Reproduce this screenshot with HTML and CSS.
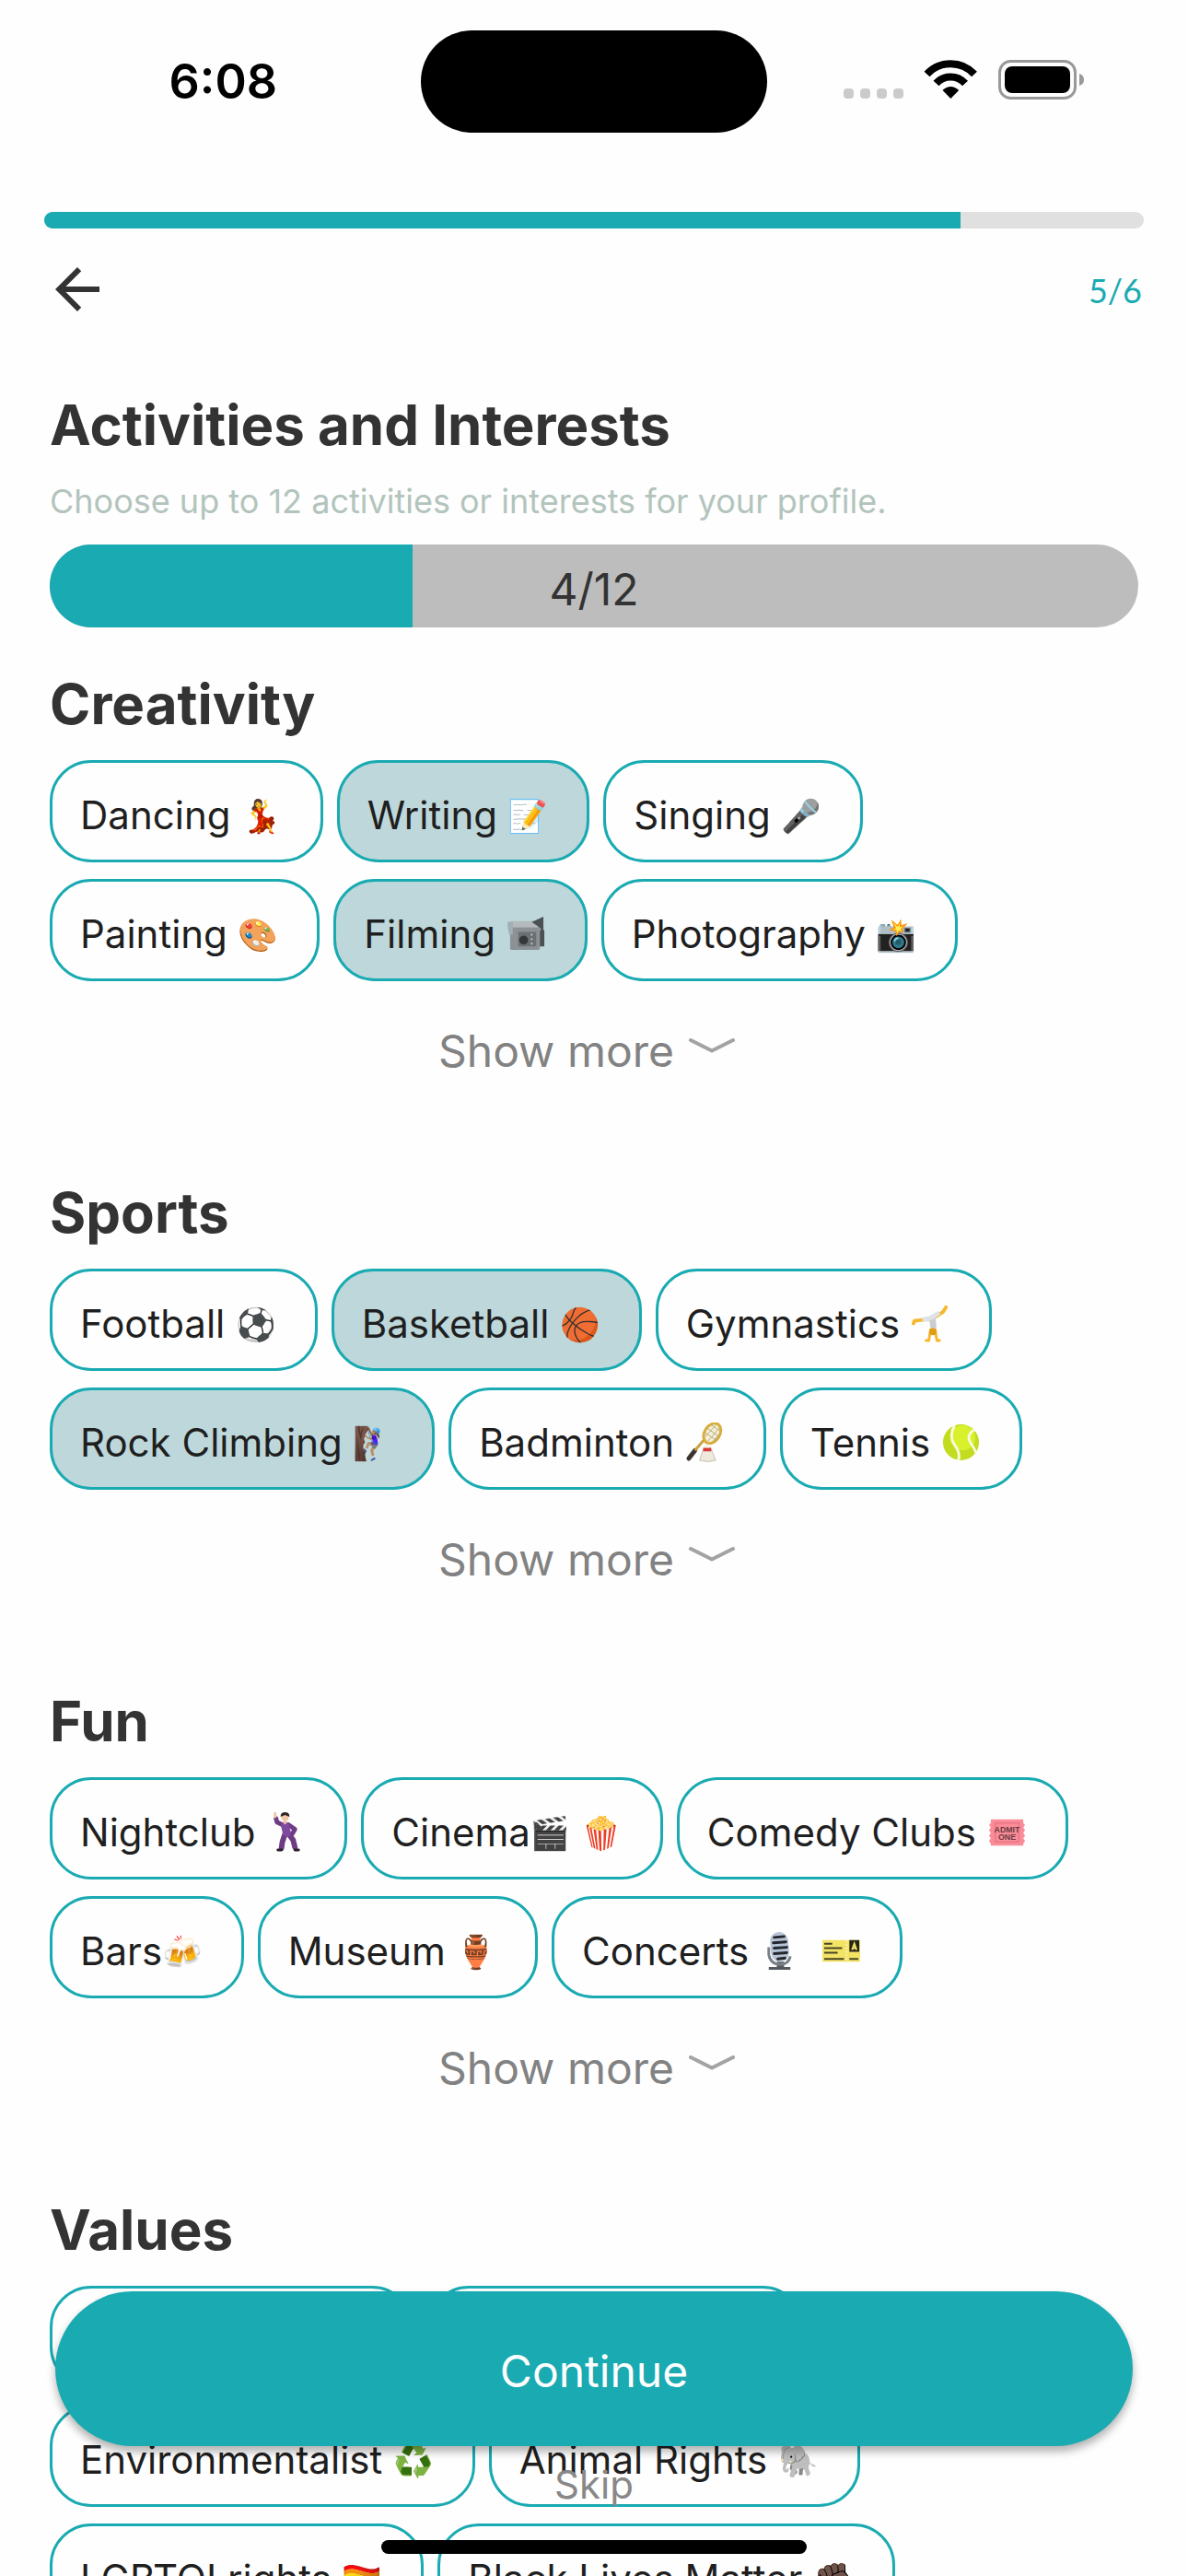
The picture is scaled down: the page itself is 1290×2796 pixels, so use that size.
FILE: index.html
```html
<!DOCTYPE html>
<html lang="en">
<head>
<meta charset="utf-8">
<meta name="viewport" content="width=device-width, initial-scale=1">
<title>Activities and Interests</title>
<link rel="stylesheet" href="styles.css">
</head>
<body>
<div class="screen">
  <header class="status-bar">
    <span class="status-time">6:08</span>
    <span class="island"></span>
    <svg class="status-icons" viewBox="0 0 264 47" aria-hidden="true">
      <g fill="#cbcbcb">
        <rect x="1" y="31" width="11" height="11" rx="4"/>
        <rect x="19" y="31" width="11" height="11" rx="4"/>
        <rect x="37" y="31" width="11" height="11" rx="4"/>
        <rect x="55" y="31" width="11" height="11" rx="4"/>
      </g>
      <g fill="none" stroke="#000" stroke-width="8">
        <path d="M91.500 15.500A35 35 0 0 1 143 15.500"/>
        <path d="M101.500 25.500A21 21 0 0 1 133 25.500"/>
      </g>
      <path d="M117.300 42L108.500 33Q117.300 25 126.200 33Z"/>
      <rect x="170.500" y="1.500" width="82" height="40" rx="12" fill="none" stroke="#999" stroke-width="3"/>
      <rect x="176" y="7" width="71" height="29" rx="8"/>
      <path d="M257 15Q262 16.500 262 21.500T257 28Z" fill="#999"/>
    </svg>
  </header>

  <div class="step-progress" role="progressbar" aria-label="Step" aria-valuemin="0" aria-valuemax="6" aria-valuenow="5">
    <div class="fill" style="width:83.333%"></div>
  </div>

  <nav class="nav">
    <button class="back" type="button" aria-label="Back">
      <svg viewBox="0 0 24 24" aria-hidden="true"><path fill="#333" d="M20 11H7.830l5.590-5.590L12 4l-8 8 8 8 1.410-1.410L7.830 13H20v-2z"/></svg>
    </button>
    <span class="step">5/6</span>
  </nav>

  <main class="content">
    <h1>Activities and Interests</h1>
    <p class="hint">Choose up to 12 activities or interests for your profile.</p>
    <div class="count" role="progressbar" aria-label="Chosen" aria-valuemin="0" aria-valuemax="12" aria-valuenow="4">
      <div class="fill" style="width:33.333%"></div>
      <span class="count-label">4/12</span>
    </div>

    <section>
      <h2>Creativity</h2>
      <div class="chips">
        <button class="chip" type="button">Dancing <span class="emoji">💃</span></button>
        <button class="chip" type="button" aria-pressed="true">Writing <span class="emoji">📝</span></button>
        <button class="chip" type="button">Singing <span class="emoji">🎤</span></button>
        <button class="chip" type="button">Painting <span class="emoji">🎨</span></button>
        <button class="chip" type="button" aria-pressed="true">Filming <svg class="pic" viewBox="0 0 44 44" aria-hidden="true"><path fill="#8b9194" d="M4 11h33v27q0 2-2 2H6q-2 0-2-2z"/><path fill="#b4babd" d="M4 8h31v7H4z"/><path fill="#9fb0b8" d="M1 9h6v14H3q-2-6-2-14z"/><path fill="#4c5053" d="M28 9L41 3v21l-4-9zM37 18h5v18h-5z"/><path fill="#6b7073" d="M13 20h20v16H13z"/><circle cx="19" cy="29" r="5" fill="#35383a"/><g fill="#d9dcdd"><circle cx="28" cy="23" r="1"/><circle cx="28" cy="28" r="1"/><circle cx="28" cy="33" r="1"/></g></svg></button>
        <button class="chip" type="button">Photography <span class="emoji">📸</span></button>
      </div>
      <button class="more" type="button">Show more<svg viewBox="0 0 80 58" aria-hidden="true"><path d="M17 17L40 28.500L63 17"/></svg></button>
    </section>

    <section>
      <h2>Sports</h2>
      <div class="chips">
        <button class="chip" type="button">Football <span class="emoji">⚽</span></button>
        <button class="chip" type="button" aria-pressed="true">Basketball <span class="emoji">🏀</span></button>
        <button class="chip" type="button">Gymnastics <svg class="pic" viewBox="0 0 44 44" aria-hidden="true"><g fill="none" stroke-linecap="round" stroke-linejoin="round"><path stroke="#f5b82e" stroke-width="4" d="M22 18L36 9L39 4M22 17L4 19L3 22"/><path stroke="#f5b82e" stroke-width="3" d="M22 29L20 41H17M27 29L29 41H32"/><path stroke="#c9cdd2" stroke-width="7" d="M24 16L25 25"/><path stroke="#dfe2e6" stroke-width="5" d="M24 15L30 11M22 16L15 17.500"/></g><circle cx="24.500" cy="31" r="4" fill="#e39c16"/></svg></button>
        <button class="chip" type="button" aria-pressed="true">Rock Climbing <span class="emoji">🧗🏽‍♀️</span></button>
        <button class="chip" type="button">Badminton <svg class="pic" viewBox="0 0 44 44" aria-hidden="true"><path stroke="#3b3532" stroke-width="5" stroke-linecap="round" d="M4 40L11 31"/><path stroke="#c9a13e" stroke-width="3" d="M11 31L21 19"/><ellipse cx="30" cy="12" rx="8.500" ry="12" transform="rotate(32 30 12)" fill="#f4efd6" stroke="#d8ad3c" stroke-width="3"/><path stroke="#b9ab80" stroke-width="1" d="M22 11l13 9M24 6l13 9M28 2l10 7M35 2L22 16M38 6L25 21M38 13l-8 9"/><path fill="#eee9dc" stroke="#c6bfae" stroke-width="1" d="M20 30h9l5 12q-9 3-18 0z"/><path fill="#d83a34" d="M20 28h9v4h-9z"/><path fill="#f7f4ed" d="M20 28q0-4 4.500-4t4.500 4z"/></svg></button>
        <button class="chip" type="button">Tennis <svg class="pic" viewBox="0 0 44 44" aria-hidden="true"><circle cx="22" cy="22" r="20" fill="#c3dc20"/><circle cx="24" cy="17" r="14" fill="#d9f02c"/><g fill="none" stroke="#f7fbdc" stroke-width="3"><path d="M15 3Q8 15 15 25T19 42"/><path d="M37 8Q27 14 33 23T38 34"/></g></svg></button>
      </div>
      <button class="more" type="button">Show more<svg viewBox="0 0 80 58" aria-hidden="true"><path d="M17 17L40 28.500L63 17"/></svg></button>
    </section>

    <section>
      <h2>Fun</h2>
      <div class="chips">
        <button class="chip" type="button">Nightclub <svg class="pic" viewBox="0 0 44 44" aria-hidden="true"><g fill="none" stroke-linecap="round" stroke-linejoin="round"><path stroke="#6e3c84" stroke-width="5" d="M18 14L12 11L11 7M25 14L32 19L29 24"/><path stroke="#6e3c84" stroke-width="6" d="M21 24L18 33L17 40M25 24L30 31L32 39"/><path stroke="#8049a0" stroke-width="9" d="M21 15L23 23"/><path stroke="#f1c6a4" stroke-width="3" d="M10 5V1M21 11v1"/><path stroke="#2d2228" stroke-width="3" d="M13 42h4M32 42h4"/></g><circle cx="21" cy="6" r="4" fill="#f1c6a4"/><path fill="#302524" d="M16 5q0-5 5-5t5 5l-5-2z"/></svg></button>
        <button class="chip" type="button">Cinema<span class="emoji">🎬</span> <span class="emoji">🍿</span></button>
        <button class="chip" type="button">Comedy Clubs <svg class="pic" viewBox="0 0 44 44" aria-hidden="true"><path fill="#fa8b98" d="M4 8h36v4l2 2-2 3 2 3-2 3 2 3-2 3 2 3-2 3v2H4v-2l-2-3 2-3-2-3 2-3-2-3 2-3-2-3 2-2z"/><path fill="none" stroke="#e06c7b" stroke-width="1" d="M9 12h26v21H9z"/><text class="admit" x="22" y="22" text-anchor="middle">ADMIT</text><text class="admit" x="22" y="31" text-anchor="middle">ONE</text></svg></button>
        <button class="chip" type="button">Bars<span class="emoji">🍻</span></button>
        <button class="chip" type="button">Museum <span class="emoji">🏺</span></button>
        <button class="chip" type="button">Concerts <svg class="pic" viewBox="0 0 44 44" aria-hidden="true"><path fill="#55595f" d="M19 34h8v6h7v3H10v-3h9z"/><path fill="none" stroke="#7a8088" stroke-width="3" d="M10 18v8q2 11 13 11 9 0 11-9"/><rect x="12" y="1" width="20" height="33" rx="10" transform="rotate(-5 22 17)" fill="#b6c4d6"/><path stroke="#24272c" stroke-width="3" stroke-linecap="round" d="M16 7l11-1M15 13l14-1M16 19l14-1M16 25l14-1M20 31l8-1"/></svg>&nbsp; <svg class="pic" viewBox="0 0 44 44" aria-hidden="true"><path fill="#f3e466" d="M1 10h42v24H1z"/><path fill="#27251a" d="M31 10h11v13H31z"/><path stroke="#4a4626" stroke-width="2" d="M3 14h9M3 19h20M3 24h15M3 31h22M31 31h10"/><path fill="none" stroke="#f3e466" stroke-width="2" d="M34 21l2.500-7 2.500 7M35 19h3"/><path stroke="#fff" stroke-width="1" stroke-dasharray="2 2" d="M28 10v24"/></svg></button>
      </div>
      <button class="more" type="button">Show more<svg viewBox="0 0 80 58" aria-hidden="true"><path d="M17 17L40 28.500L63 17"/></svg></button>
    </section>

    <section>
      <h2>Values</h2>
      <div class="chips">
        <button class="chip" type="button">Voting Rights <span class="emoji">🗳️</span></button>
        <button class="chip" type="button">Social Justice <span class="emoji">🤝</span></button>
        <button class="chip" type="button">Environmentalist <span class="emoji">♻️</span></button>
        <button class="chip" type="button">Animal Rights <span class="emoji">🐘</span></button>
        <button class="chip" type="button">LGBTQI rights <span class="emoji">🏳️‍🌈</span></button>
        <button class="chip" type="button">Black Lives Matter <span class="emoji">✊🏿</span></button>
      </div>
    </section>
  </main>

  <footer class="actions">
    <button class="continue" type="button">Continue</button>
    <button class="skip" type="button">Skip</button>
    <span class="home-indicator"></span>
  </footer>
</div>
</body>
</html>
```
FILE: styles.css
```css
:root {
  --teal: #19aab2;
  --teal-soft: #bdd7da;
  --ink: #333;
}

* { box-sizing: border-box; }

body {
  margin: 0;
  background: #fefefe;
  color: var(--ink);
  font-family: Inter, "Liberation Sans", "Noto Color Emoji", sans-serif;
}

button {
  margin: 0;
  padding: 0;
  border: 0;
  background: none;
  color: inherit;
  font: inherit;
  cursor: pointer;
}

.screen {
  position: relative;
  height: 100vh;
  overflow: hidden;
}

/* Status bar */
.status-bar {
  display: grid;
  grid-template-columns: 1fr 376px 1fr;
  align-items: center;
  padding-top: 33px;
  margin-bottom: 86px;
}

.status-time {
  margin-right: 156px;
  text-align: right;
  font-size: 52px;
  font-weight: 600;
  line-height: 64px;
  color: #000;
}

.island {
  height: 111px;
  border-radius: 56px;
  background: #000;
}

.status-icons {
  width: 264px;
  height: 47px;
  margin-right: 111px;
  justify-self: end;
}

/* Step progress and navigation */
.step-progress {
  height: 18px;
  margin: 0 48px 30px;
  border-radius: 9px;
  background: #e0e0e0;
  overflow: hidden;
}

.fill {
  height: 100%;
  background: var(--teal);
}

.nav {
  display: flex;
  align-items: center;
  justify-content: space-between;
  margin: 0 50px 75px 48px;
}

.back,
.back svg {
  display: block;
  width: 72px;
  height: 72px;
}

.step {
  padding-top: 2px;
  font-family: Lato, "Open Sans", sans-serif;
  font-size: 36px;
  line-height: 44px;
  color: var(--teal);
}

/* Scrolling content */
.content { padding: 0 54px; }

h1,
h2 {
  margin: 0 0 25px;
  font-size: 60px;
  font-weight: 700;
  line-height: 72px;
}

.hint {
  margin: 0 0 25px;
  font-size: 36px;
  line-height: 44px;
  color: #b2c4bc;
}

.count {
  position: relative;
  height: 90px;
  margin-bottom: 47px;
  border-radius: 45px;
  background: #bdbdbd;
  overflow: hidden;
}

.count-label {
  position: absolute;
  inset: 0;
  padding-top: 4px;
  text-align: center;
  font-size: 48px;
  line-height: 90px;
}

.chips {
  display: flex;
  flex-wrap: wrap;
  gap: 18px 15px;
}

.chip {
  padding: 31px 42px 23px 30px;
  border: 3px solid var(--teal);
  border-radius: 45px;
  color: #1f1f1f;
  font-size: 42px;
  line-height: 51px;
  white-space: nowrap;
}

.chip[aria-pressed="true"] { background: var(--teal-soft); }

.emoji {
  font-family: "Noto Color Emoji", sans-serif;
  font-size: 35px;
  line-height: 1;
  vertical-align: 2px;
}

.pic {
  width: 43px;
  height: 43px;
  margin: -8px 0;
  vertical-align: 2px;
}

.admit {
  font-family: "Liberation Sans", sans-serif;
  font-size: 9px;
  font-weight: 700;
  fill: #6b3b42;
}

.more {
  display: flex;
  margin: 47px auto 110px;
  font-size: 48px;
  line-height: 58px;
  color: #828282;
}

.more svg {
  width: 82px;
  height: 58px;
  fill: none;
  stroke: #a3a3a3;
  stroke-width: 4;
  stroke-linecap: round;
  stroke-linejoin: round;
}

/* Actions over the content */
.actions {
  position: absolute;
  inset: auto 0 0;
  display: flex;
  flex-direction: column;
  align-items: center;
  padding: 0 60px 74px;
}

.continue {
  width: 100%;
  height: 168px;
  margin-bottom: 17px;
  padding-top: 5px;
  border-radius: 84px;
  background: var(--teal);
  box-shadow: 0 6px 10px rgba(0, 0, 0, 0.3);
  color: #fff;
  font-size: 48px;
  line-height: 58px;
}

.skip {
  font-size: 42px;
  line-height: 50px;
  color: #888;
}

.home-indicator {
  position: absolute;
  bottom: 24px;
  width: 462px;
  height: 15px;
  border-radius: 8px;
  background: #000;
}
```
